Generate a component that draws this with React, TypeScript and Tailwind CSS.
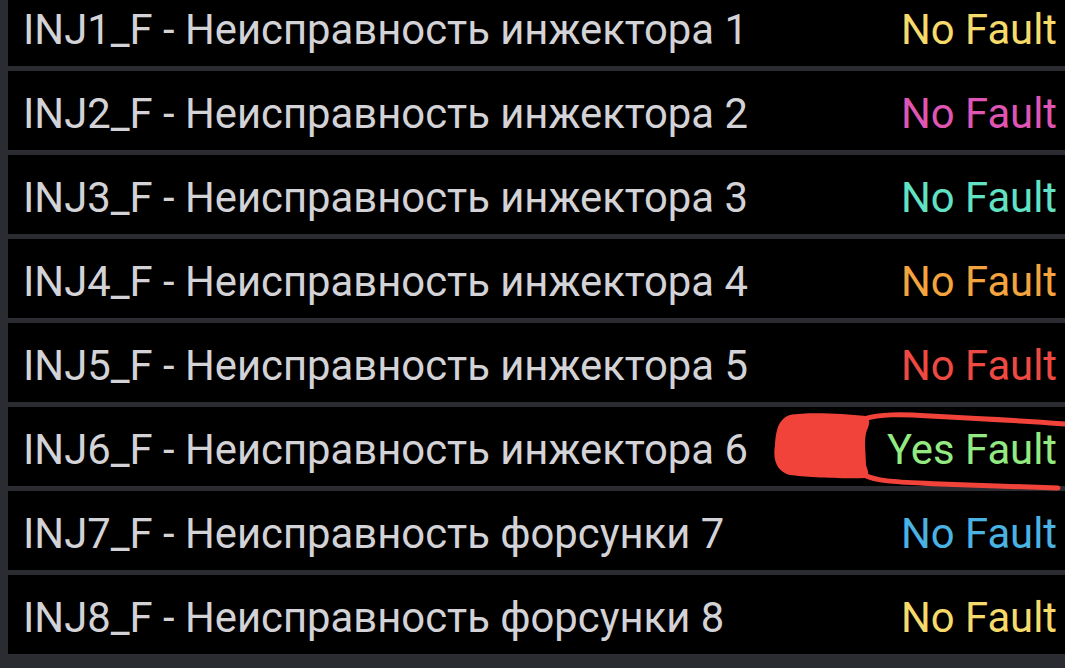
const rows = [
  { code: 'INJ1_F', label: 'Неисправность инжектора 1', value: 'No Fault', color: 'text-[#f6da6c]' },
  { code: 'INJ2_F', label: 'Неисправность инжектора 2', value: 'No Fault', color: 'text-[#df55b3]' },
  { code: 'INJ3_F', label: 'Неисправность инжектора 3', value: 'No Fault', color: 'text-[#62e2c4]' },
  { code: 'INJ4_F', label: 'Неисправность инжектора 4', value: 'No Fault', color: 'text-[#f3a43f]' },
  { code: 'INJ5_F', label: 'Неисправность инжектора 5', value: 'No Fault', color: 'text-[#ee4a43]' },
  { code: 'INJ6_F', label: 'Неисправность инжектора 6', value: 'Yes Fault', color: 'text-[#93ea82]' },
  { code: 'INJ7_F', label: 'Неисправность форсунки 7', value: 'No Fault', color: 'text-[#4bb3e3]' },
  { code: 'INJ8_F', label: 'Неисправность форсунки 8', value: 'No Fault', color: 'text-[#f6da6c]' },
];

// hand-drawn red mark over row 6 (coords in page x, row-relative y)
function Scribble() {
  return (
    <svg
      className="absolute left-[-8px] top-0 pointer-events-none overflow-visible"
      width="1065"
      height="79"
      viewBox="0 0 1065 79"
    >
      <path
        d="M790 8 C805 5 840 6 866 9 C872 14 868 20 866 26 C864 36 866 48 866 58 C868 64 870 68 866 71 C840 72 805 70 790 68 C775 64 773 50 775 38 C776 24 778 12 790 8 Z"
        fill="#f2433a"
      />
      <path
        d="M864 12 C880 7 900 7 930 9 C970 11 1010 13 1066 17"
        stroke="#f2433a"
        strokeWidth="5"
        fill="none"
        strokeLinecap="round"
      />
      <path
        d="M864 68 C878 75 900 75 940 77 C990 79 1030 80 1058 81"
        stroke="#f2433a"
        strokeWidth="5"
        fill="none"
        strokeLinecap="round"
      />
    </svg>
  );
}

export default function App() {
  return (
    <div
      className="w-[1065px] h-[668px] overflow-hidden bg-[#2b2c32] pl-[8px]"
      style={{ fontFamily: 'Roboto, "Noto Sans", sans-serif' }}
    >
      <div className="flex flex-col gap-[5px] mt-[-13px]">
        {rows.map((r, i) => (
          <div
            key={r.code}
            className="relative h-[79px] bg-black flex items-center justify-between pl-[15px] pr-[8px] pt-[6px] text-[41.8px] leading-none"
          >
            <span className="text-[#d3d3d7] whitespace-nowrap">
              {r.code} - {r.label}
            </span>
            <span className={`${r.color} whitespace-nowrap`}>{r.value}</span>
            {i === 5 && <Scribble />}
          </div>
        ))}
      </div>
    </div>
  );
}
